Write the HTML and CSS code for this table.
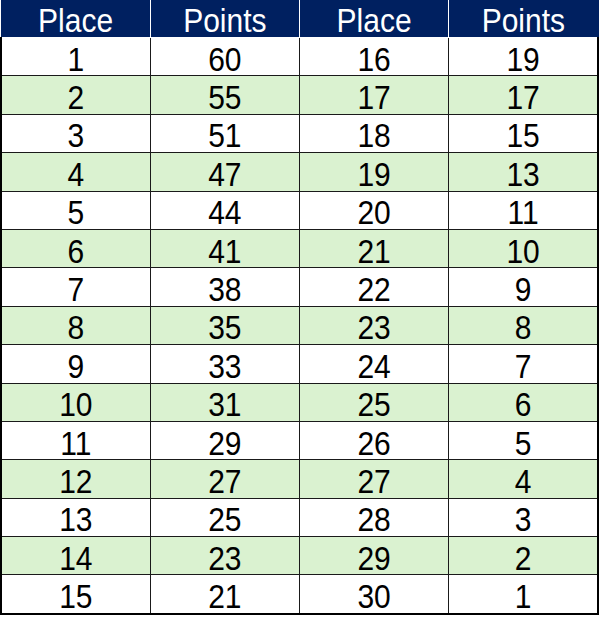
FILE: index.html
```html
<!DOCTYPE html>
<html>
<head>
<meta charset="utf-8">
<link rel="stylesheet" href="styles.css">
</head>
<body>
<table class="points">
<thead>
<tr><th><span>Place</span></th><th><span>Points</span></th><th><span>Place</span></th><th><span>Points</span></th></tr>
</thead>
<tbody>
<tr><td><span>1</span></td><td><span>60</span></td><td><span>16</span></td><td><span>19</span></td></tr>
<tr class="alt"><td><span>2</span></td><td><span>55</span></td><td><span>17</span></td><td><span>17</span></td></tr>
<tr><td><span>3</span></td><td><span>51</span></td><td><span>18</span></td><td><span>15</span></td></tr>
<tr class="alt"><td><span>4</span></td><td><span>47</span></td><td><span>19</span></td><td><span>13</span></td></tr>
<tr><td><span>5</span></td><td><span>44</span></td><td><span>20</span></td><td><span>11</span></td></tr>
<tr class="alt"><td><span>6</span></td><td><span>41</span></td><td><span>21</span></td><td><span>10</span></td></tr>
<tr><td><span>7</span></td><td><span>38</span></td><td><span>22</span></td><td><span>9</span></td></tr>
<tr class="alt"><td><span>8</span></td><td><span>35</span></td><td><span>23</span></td><td><span>8</span></td></tr>
<tr><td><span>9</span></td><td><span>33</span></td><td><span>24</span></td><td><span>7</span></td></tr>
<tr class="alt"><td><span>10</span></td><td><span>31</span></td><td><span>25</span></td><td><span>6</span></td></tr>
<tr><td><span>11</span></td><td><span>29</span></td><td><span>26</span></td><td><span>5</span></td></tr>
<tr class="alt"><td><span>12</span></td><td><span>27</span></td><td><span>27</span></td><td><span>4</span></td></tr>
<tr><td><span>13</span></td><td><span>25</span></td><td><span>28</span></td><td><span>3</span></td></tr>
<tr class="alt"><td><span>14</span></td><td><span>23</span></td><td><span>29</span></td><td><span>2</span></td></tr>
<tr><td><span>15</span></td><td><span>21</span></td><td><span>30</span></td><td><span>1</span></td></tr>
</tbody>
</table>
</body>
</html>
```
FILE: styles.css
```css
html, body {
  margin: 0;
  padding: 0;
  background: #ffffff;
}
.points {
  border-collapse: collapse;
  width: 599px;
  table-layout: fixed;
  font-family: "Liberation Sans", Arial, sans-serif;
  font-size: 30px;
  color: #000000;
}
.points th, .points td {
  border: 1px solid #1a1a1a;
  text-align: center;
  padding: 0;
  line-height: 1;
  vertical-align: middle;
}
.points span {
  display: inline-block;
  transform: scaleY(1.12);
  position: relative;
  top: 3px;
}
.points th span {
  top: 2px;
}
.points th {
  background: #002060;
  color: #ffffff;
  font-weight: normal;
  height: 37px;
  border-color: #ffffff;
  border-top: none;
}
.points th:first-child { border-left: 1px solid #002060; }
.points th:last-child { border-right: 1px solid #002060; }
.points td {
  height: 37.4px;
}
.points tr.alt td {
  background: #daf2d0;
}
.points tbody tr:first-child td { border-top: 1px solid #1a1a1a; }
.points td:first-child { border-left: 2px solid #000; }
.points td:last-child { border-right: 2px solid #000; }
.points tbody tr:last-child td { border-bottom: 2px solid #000; }
```
